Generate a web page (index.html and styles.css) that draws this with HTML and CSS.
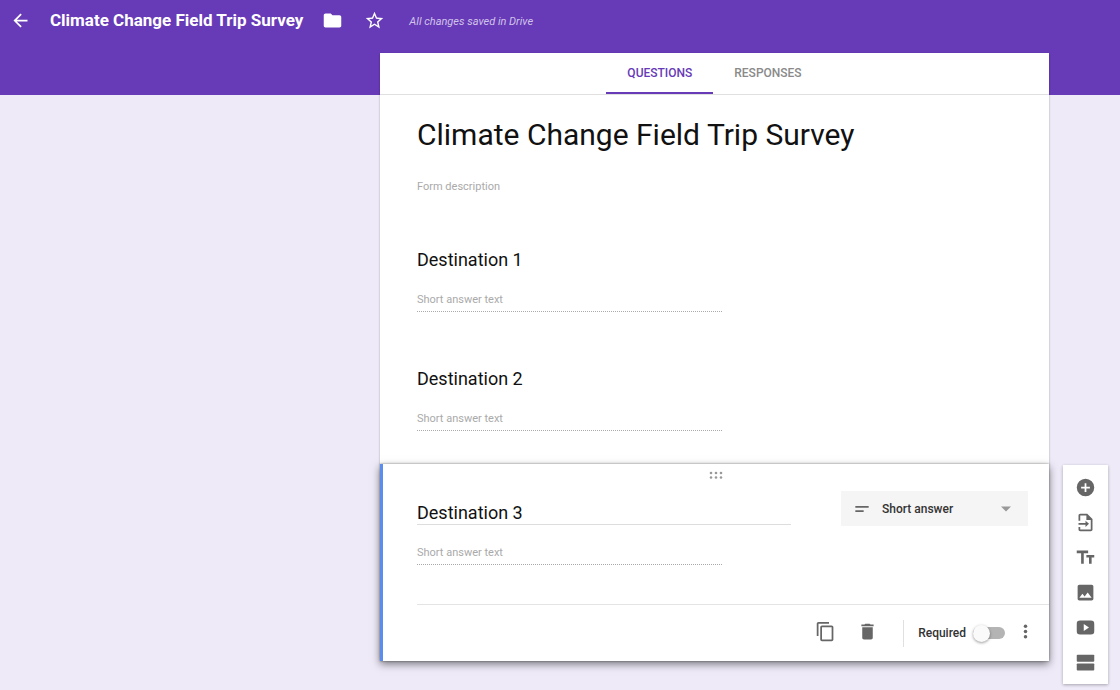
FILE: index.html
```html
<!DOCTYPE html>
<html lang="en">
<head>
<meta charset="utf-8">
<meta name="viewport" content="width=device-width, initial-scale=1">
<title>Climate Change Field Trip Survey</title>
<link rel="stylesheet" href="styles.css">
</head>
<body>
<header class="app-bar">
  <div class="app-bar-row">
    <button class="icon-button" type="button" aria-label="Back">
      <svg class="icon" viewBox="0 0 24 24"><path d="M20 11H7.8l5.6-5.6L12 4l-8 8 8 8 1.4-1.4L7.8 13H20z"/></svg>
    </button>
    <span class="app-title">Climate Change Field Trip Survey</span>
    <button class="icon-button" type="button" aria-label="Move to folder">
      <svg class="icon" viewBox="0 0 24 24"><path d="M10 4H4c-1.1 0-2 .9-2 2v12c0 1.100.9 2 2 2h16c1.100 0 2-.9 2-2V8c0-1.100-.9-2-2-2h-8z"/></svg>
    </button>
    <button class="icon-button star-button" type="button" aria-label="Star">
      <svg class="icon" viewBox="0 0 24 24"><path d="M22 9.240l-7.190-.62L12 2 9.190 8.630 2 9.240l5.460 4.730L5.820 21 12 17.270 18.180 21l-1.630-7.030zM12 15.400l-3.760 2.270 1-4.280-3.320-2.880 4.380-.38L12 6.100l1.710 4.040 4.380.38-3.320 2.880 1 4.280z"/></svg>
    </button>
    <span class="save-status">All changes saved in Drive</span>
  </div>
</header>

<main class="workspace">
  <section class="form-card">
    <nav class="tabs">
      <a class="tab tab-active" href="#questions" aria-current="page">QUESTIONS</a>
      <a class="tab" href="#responses">RESPONSES</a>
    </nav>
    <div class="form-body">
      <input class="form-title" type="text" aria-label="Form title" value="Climate Change Field Trip Survey">
      <input class="form-description" type="text" aria-label="Form description" placeholder="Form description">
      <div class="question">
        <label class="question-title" for="answer-1">Destination 1</label>
        <input class="answer" id="answer-1" type="text" placeholder="Short answer text">
      </div>
      <div class="question question-last">
        <label class="question-title" for="answer-2">Destination 2</label>
        <input class="answer" id="answer-2" type="text" placeholder="Short answer text">
      </div>
    </div>
  </section>

  <section class="active-card" aria-label="Edit question">
    <button class="drag-handle" type="button" aria-label="Reorder question">
      <svg class="drag-dots" viewBox="0 0 14 8"><circle cx="2" cy="2" r="1.300"/><circle cx="7" cy="2" r="1.300"/><circle cx="12" cy="2" r="1.300"/><circle cx="2" cy="6.500" r="1.300"/><circle cx="7" cy="6.500" r="1.300"/><circle cx="12" cy="6.500" r="1.300"/></svg>
    </button>
    <div class="edit-row">
      <input class="question-input" type="text" aria-label="Question" value="Destination 3">
      <div class="type-picker">
        <svg class="icon type-icon" viewBox="0 0 24 24"><path d="M4 8.500h16v2H4zM4 13.500h10v2H4z"/></svg>
        <select class="type-select" aria-label="Question type">
          <option>Short answer</option>
          <option>Paragraph</option>
          <option>Multiple choice</option>
        </select>
        <svg class="icon type-arrow" viewBox="0 0 24 24"><path d="M6 9l6 6 6-6z"/></svg>
      </div>
    </div>
    <input class="answer answer-edit" type="text" aria-label="Answer preview" placeholder="Short answer text">
    <div class="card-footer">
      <button class="icon-button" type="button" aria-label="Duplicate">
        <svg class="icon" viewBox="0 0 24 24"><path d="M16 1H4c-1.100 0-2 .9-2 2v14h2V3h12zM19 5H8c-1.100 0-2 .9-2 2v14c0 1.100.9 2 2 2h11c1.100 0 2-.9 2-2V7c0-1.100-.9-2-2-2zm0 16H8V7h11z"/></svg>
      </button>
      <button class="icon-button delete-button" type="button" aria-label="Delete">
        <svg class="icon" viewBox="0 0 24 24"><path d="M6 19c0 1.100.9 2 2 2h8c1.100 0 2-.9 2-2V7H6zM19 4h-3.500l-1-1h-5l-1 1H5v2h14z"/></svg>
      </button>
      <div class="required">
        <label class="required-label" for="required">Required</label>
        <input class="switch" id="required" type="checkbox" role="switch">
      </div>
      <button class="icon-button more-button" type="button" aria-label="More options">
        <svg class="icon" viewBox="0 0 24 24"><circle cx="12" cy="6" r="2"/><circle cx="12" cy="12" r="2"/><circle cx="12" cy="18" r="2"/></svg>
      </button>
    </div>
  </section>

  <div class="toolbar" role="toolbar" aria-label="Add to form">
    <button class="tool" type="button" aria-label="Add question">
      <svg class="icon" viewBox="0 0 24 24"><path d="M12 2a10 10 0 1 0 0 20 10 10 0 0 0 0-20zm5 11h-4v4h-2v-4H7v-2h4V7h2v4h4z"/></svg>
    </button>
    <button class="tool" type="button" aria-label="Import questions">
      <svg class="icon" viewBox="0 0 24 24"><path fill-rule="evenodd" d="M14 2H6c-1.100 0-2 .9-2 2v6h2V4h7v5h5v11H6v-3H4v3c0 1.100.9 2 2 2h12c1.100 0 2-.9 2-2V8z"/><path d="M4 12.500h8V10l4 3.500-4 3.500v-2.500H4z"/></svg>
    </button>
    <button class="tool" type="button" aria-label="Add title and description">
      <svg class="icon" viewBox="0 0 24 24"><path d="M2 4v3h5v12h3V7h5V4zM22 9h-9v3h3v7h3v-7h3z"/></svg>
    </button>
    <button class="tool" type="button" aria-label="Add image">
      <svg class="icon" viewBox="0 0 24 24"><path d="M21 19V5c0-1.100-.9-2-2-2H5c-1.100 0-2 .9-2 2v14c0 1.100.9 2 2 2h14c1.100 0 2-.9 2-2zM5 18l3.500-4.500 2.500 3 3.500-4.500L19 18z"/></svg>
    </button>
    <button class="tool" type="button" aria-label="Add video">
      <svg class="icon" viewBox="0 0 24 24"><path d="M6 4h12c3 0 4 1 4 4v8c0 3-1 4-4 4H6c-3 0-4-1-4-4V8c0-3 1-4 4-4zm4 4v8l6-4z"/></svg>
    </button>
    <button class="tool" type="button" aria-label="Add section">
      <svg class="icon" viewBox="0 0 24 24"><rect x="2" y="3" width="20" height="8" rx="1"/><rect x="2" y="13" width="20" height="8" rx="1"/></svg>
    </button>
  </div>
</main>
</body>
</html>
```

FILE: styles.css
```css
* {
  box-sizing: border-box;
}

body {
  margin: 0;
  background: #eeeaf8;
  color: #111;
  font-family: Roboto, "Liberation Sans", sans-serif;
  font-size: 12px;
}

button,
input,
select {
  margin: 0;
  padding: 0;
  border: 0;
  background: none;
  color: inherit;
  font-family: inherit;
}

input::placeholder {
  color: #aaa;
  opacity: 1;
}

.icon {
  display: block;
  width: 21px;
  height: 21px;
  fill: currentColor;
}

.icon-button {
  flex: none;
  cursor: pointer;
}

.app-bar {
  height: 95px;
  background: #673ab7;
  color: #fff;
}

.app-bar-row {
  display: flex;
  align-items: center;
  height: 40px;
  padding: 0 10px;
  gap: 19px;
}

.app-title {
  font-size: 17px;
  font-weight: 700;
  white-space: nowrap;
}

.star-button {
  margin-left: 2px;
}

.save-status {
  margin-left: 5px;
  padding-top: 3px;
  color: #d1c4e9;
  font-size: 11px;
  font-style: italic;
}

.workspace {
  display: grid;
  grid-template-columns: minmax(0, 380fr) minmax(0, 669fr) 59px;
  align-items: start;
  margin-top: -42px;
  padding-right: 12px;
  padding-bottom: 5px;
}

.form-card {
  grid-column: 2;
  background: #fff;
  box-shadow: 0 1px 2px rgba(0, 0, 0, 0.3);
}

.tabs {
  display: flex;
  justify-content: center;
  height: 42px;
  border-bottom: 1px solid #e0e0e0;
}

.tab {
  padding: 0 21px;
  color: #8a8a8a;
  font-weight: 500;
  line-height: 40px;
  text-decoration: none;
}

.tab-active {
  border-bottom: 2px solid #673ab7;
  color: #673ab7;
}

.form-body {
  display: flex;
  flex-direction: column;
  padding: 18px 37px 33px;
}

.form-title {
  width: 100%;
  height: 42px;
  font-size: 30px;
}

.form-description {
  width: 100%;
  height: 24px;
  margin-top: 19px;
  font-size: 11px;
}

.question {
  display: flex;
  flex-direction: column;
  gap: 16px;
  margin-top: 50px;
}

.question-last {
  margin-top: 55px;
}

.question-title {
  font-size: 18px;
  line-height: 24px;
}

.answer {
  width: 305px;
  max-width: 100%;
  height: 24px;
  border-bottom: 1px dotted #aaa;
  font-size: 11px;
}

.active-card {
  position: relative;
  grid-column: 2;
  border-left: 3px solid #5b8def;
  background: #fff;
  box-shadow: 0 0 2px rgba(0, 0, 0, 0.4), 0 3px 8px rgba(0, 0, 0, 0.5);
}

.drag-handle {
  display: block;
  width: 40px;
  height: 22px;
  margin: 0 auto;
  cursor: move;
}

.drag-dots {
  display: block;
  width: 14px;
  height: 8px;
  margin: 0 auto;
  fill: #999;
}

.edit-row {
  display: flex;
  align-items: flex-start;
  gap: 50px;
  padding: 5px 21px 0 34px;
}

.question-input {
  flex: 1;
  min-width: 0;
  height: 34px;
  padding-top: 9px;
  border-bottom: 1px solid #ddd;
  font-size: 18px;
}

.type-picker {
  display: grid;
  grid-template-columns: 41px 1fr 32px;
  align-items: center;
  width: 187px;
  background: #f5f5f5;
  color: #333;
}

.type-select {
  grid-area: 1 / 1 / 2 / 4;
  height: 35px;
  padding-left: 41px;
  appearance: none;
  font-size: 12px;
  font-weight: 500;
}

.type-icon,
.type-arrow {
  width: 20px;
  height: 20px;
  pointer-events: none;
}

.type-icon {
  grid-area: 1 / 1;
  justify-self: center;
  color: #666;
}

.type-arrow {
  grid-area: 1 / 3;
  color: #999;
}

.answer-edit {
  display: block;
  margin: 15px 34px 39px;
}

.card-footer {
  display: flex;
  align-items: center;
  justify-content: flex-end;
  height: 57px;
  margin-left: 34px;
  padding-right: 13px;
  border-top: 1px solid #e4e4e4;
  color: #666;
}

.card-footer .icon-button {
  padding-bottom: 3px;
}

.delete-button {
  margin-left: 21px;
}

.required {
  display: flex;
  align-items: center;
  gap: 7px;
  height: 27px;
  margin-left: 25px;
  padding-left: 14px;
  border-left: 1px solid #e0e0e0;
}

.required-label {
  color: #333;
  font-weight: 500;
}

.switch {
  display: flex;
  align-items: center;
  width: 32px;
  height: 12px;
  border-radius: 6px;
  background: #b4b4b4;
  appearance: none;
  cursor: pointer;
}

.switch::before {
  width: 17px;
  height: 17px;
  flex: none;
  border-radius: 50%;
  background: #fafafa;
  box-shadow: 0 1px 3px rgba(0, 0, 0, 0.4);
  content: "";
}

.switch:checked::before {
  margin-left: auto;
}

.more-button {
  margin-left: 10px;
}

.toolbar {
  display: flex;
  flex-direction: column;
  grid-column: 3;
  margin-top: 1px;
  margin-left: 14px;
  padding: 5px 0 4px;
  background: #fff;
  box-shadow: 0 1px 3px rgba(0, 0, 0, 0.3);
  color: #666;
}

.tool {
  display: grid;
  place-items: center;
  height: 35px;
  cursor: pointer;
}
```
